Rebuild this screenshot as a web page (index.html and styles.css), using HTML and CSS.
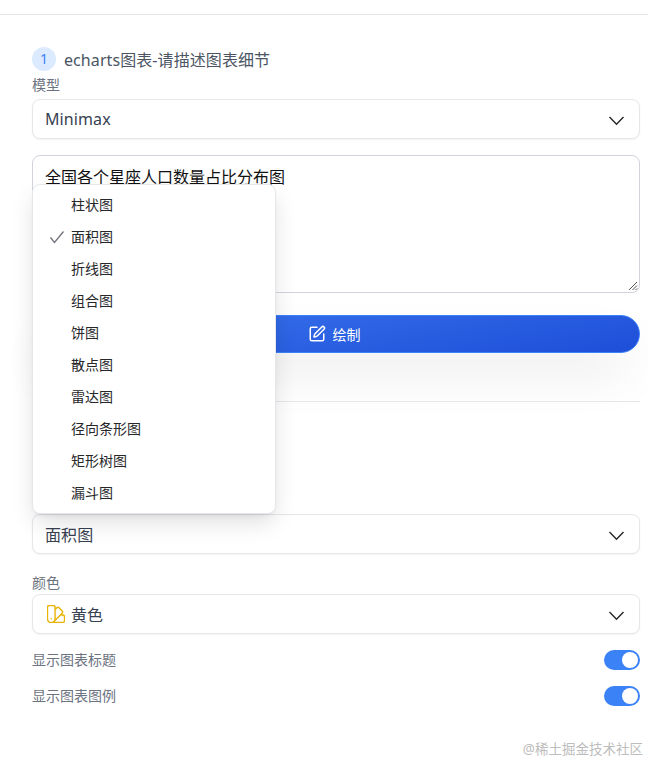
FILE: index.html
```html
<!DOCTYPE html>
<html lang="zh-CN">
<head>
  <meta charset="UTF-8">
  <title>echarts图表</title>
  <link rel="stylesheet" href="styles.css">
</head>
<body>

  <div class="top-bar"></div>

  <div class="panel">
    <div class="step">
      <span class="step-num">1</span>
      <span class="step-title">echarts图表-请描述图表细节</span>
    </div>

    <div class="label">模型</div>
    <div class="select">
      <span class="select-value">Minimax</span>
      <svg class="chevron" viewBox="0 0 16 16"><path d="M.5 6l7 7.300 7-7.300"/></svg>
    </div>

    <div class="textarea">
      全国各个星座人口数量占比分布图
      <svg class="resizer" viewBox="0 0 10 10"><path d="M9 1L1 9M9 4.500L4.500 9M9 7.500L7.500 9"/></svg>
    </div>

    <button class="draw-btn">
      <svg class="pen" viewBox="0 0 24 24"><path d="M12 3H5a2 2 0 0 0-2 2v14a2 2 0 0 0 2 2h14a2 2 0 0 0 2-2v-7"/><path d="M18.375 2.625a1 1 0 0 1 3 3l-9.013 9.014a2 2 0 0 1-.853.505l-2.873.84a.5.5 0 0 1-.62-.62l.84-2.873a2 2 0 0 1 .506-.852z"/></svg>
      绘制
    </button>

    <div class="divider"></div>

    <div class="select chart-type">
      <span class="select-value">面积图</span>
      <svg class="chevron" viewBox="0 0 16 16"><path d="M.5 6l7 7.300 7-7.300"/></svg>
    </div>

    <div class="label color-label">颜色</div>
    <div class="select">
      <span class="select-value with-icon">
        <svg class="swatch" viewBox="2.500 2.500 19 19"><path d="M7 21a4 4 0 01-4-4V5a2 2 0 012-2h4a2 2 0 012 2v12a4 4 0 01-4 4zm0 0h12a2 2 0 002-2v-4a2 2 0 00-2-2h-2.343M11 7.343l1.657-1.657a2 2 0 012.828 0l2.829 2.829a2 2 0 010 2.828l-8.486 8.485M7 17h.01"/></svg>
        黄色
      </span>
      <svg class="chevron" viewBox="0 0 16 16"><path d="M.5 6l7 7.300 7-7.300"/></svg>
    </div>

    <div class="switch-row">
      <span class="switch-label">显示图表标题</span>
      <span class="switch"><i></i></span>
    </div>
    <div class="switch-row">
      <span class="switch-label">显示图表图例</span>
      <span class="switch"><i></i></span>
    </div>

    <!-- open dropdown, sits over the form -->
    <ul class="menu">
      <li>柱状图</li>
      <li class="checked">
        <svg class="check" viewBox="0 0 16 16"><path d="M1.500 8.500l4 5L14.500 2.500"/></svg>
        面积图
      </li>
      <li>折线图</li>
      <li>组合图</li>
      <li>饼图</li>
      <li>散点图</li>
      <li>雷达图</li>
      <li>径向条形图</li>
      <li>矩形树图</li>
      <li>漏斗图</li>
    </ul>
  </div>

  <div class="watermark">@稀土掘金技术社区</div>

</body>
</html>
```

FILE: styles.css
```css
* {
  box-sizing: border-box;
}

html, body {
  height: 100%;
}

body {
  margin: 0;
  background-color: #fff;
  color: #374151;
  font-family: "Noto Sans", "Noto Sans CJK SC", sans-serif;
  overflow: hidden;
  position: relative;
}

.top-bar {
  height: 15px;
  border-bottom: 1px solid #e5e7eb;
}

.panel {
  position: relative;
  padding: 32px 8px 0 32px;
}

.step {
  display: flex;
  align-items: center;
  gap: 8px;
  height: 24px;
}

.step-num {
  width: 24px;
  height: 24px;
  border-radius: 50%;
  background-color: #dbeafe;
  color: #3b82f6;
  font-size: 14px;
  line-height: 24px;
  text-align: center;
}

.step-title {
  font-size: 16px;
  letter-spacing: 0.08px;
  color: #4b5563;
}

.label {
  margin-top: 6px;
  height: 22px;
  font-size: 14px;
  line-height: 16px;
  color: #6b7280;
}

.select {
  display: flex;
  align-items: center;
  justify-content: space-between;
  height: 40px;
  padding: 0 12px;
  background-color: #fff;
  border: 1px solid #e5e7eb;
  border-radius: 8px;
  box-shadow: 0 1px 2px rgba(0,0,0,0.05);
}

.select-value {
  font-size: 16px;
  letter-spacing: 0.1px;
  color: #374151;
}

.with-icon {
  display: flex;
  align-items: center;
  gap: 6px;
  padding-left: 2px;
}

.chevron {
  width: 16px;
  height: 16px;
  margin-right: 2px;
  fill: none;
  stroke: #27272a;
  stroke-width: 1.4;
}

.swatch {
  width: 18px;
  height: 18px;
  fill: none;
  stroke: #eab308;
  stroke-width: 1.500;
  stroke-linecap: round;
  stroke-linejoin: round;
}

.textarea {
  position: relative;
  margin-top: 16px;
  height: 138px;
  padding: 9px 12px;
  background-color: #fff;
  border: 1px solid #d1d5db;
  border-radius: 8px;
  font-size: 16px;
  line-height: 24px;
  color: #111;
}

.resizer {
  position: absolute;
  right: 1px;
  bottom: 1px;
  width: 10px;
  height: 10px;
  fill: none;
  stroke: #555;
  stroke-width: 1;
}

.draw-btn {
  display: flex;
  align-items: center;
  justify-content: center;
  gap: 7px;
  width: 100%;
  height: 38px;
  margin-top: 22px;
  padding: 0 10px 0 6px;
  border: 1px solid #3b82f6;
  border-radius: 19px;
  background-image: linear-gradient(170deg, #3b76ee, #1d4ed8);
  color: #fff;
  font-family: inherit;
  font-size: 14px;
  box-shadow: 0 25px 50px -12px rgba(0,0,0,0.18);
}

.pen {
  width: 18px;
  height: 18px;
  fill: none;
  stroke: #fff;
  stroke-width: 2;
  stroke-linecap: round;
  stroke-linejoin: round;
}

.divider {
  margin-top: 48px;
  border-top: 1px solid #e5e7eb;
}

.chart-type {
  margin-top: 112px;
}

.color-label {
  margin-top: 21px;
  height: 19px;
}

.switch-row {
  display: flex;
  align-items: center;
  justify-content: space-between;
  height: 20px;
  margin-top: 16px;
}

.switch-label {
  margin-top: -2px;
  font-size: 14px;
  color: #6b7280;
}

.switch {
  display: flex;
  align-items: center;
  justify-content: flex-end;
  width: 36px;
  height: 20px;
  padding-right: 2px;
  border-radius: 10px;
  background-color: #3b82f6;
}

.switch i {
  width: 16px;
  height: 16px;
  border-radius: 50%;
  background-color: #fff;
}

.menu {
  position: absolute;
  left: 32px;
  top: 169px;
  width: 244px;
  margin: 0;
  padding: 4px;
  list-style: none;
  background-color: #fff;
  border: 1px solid #e5e7eb;
  border-radius: 8px;
  box-shadow: 0 10px 25px -3px rgba(0,0,0,0.14), 0 4px 6px -4px rgba(0,0,0,0.1);
}

.menu li {
  position: relative;
  height: 32px;
  padding-left: 34px;
  font-size: 14px;
  line-height: 32px;
  color: #27272a;
}

.check {
  position: absolute;
  left: 12px;
  top: 8px;
  width: 16px;
  height: 16px;
  fill: none;
  stroke: #71717a;
  stroke-width: 1.3;
}

.watermark {
  position: absolute;
  right: 5px;
  top: 739px;
  font-size: 13.5px;
  line-height: 20px;
  color: #bdbdbd;
}
```
